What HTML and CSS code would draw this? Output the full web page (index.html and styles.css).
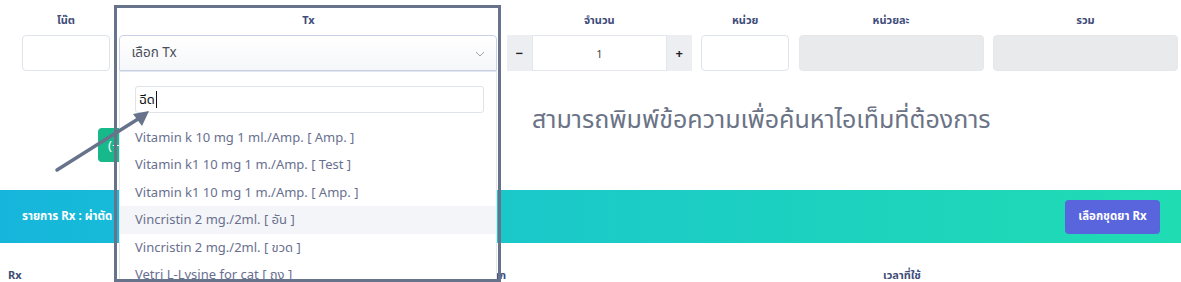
FILE: index.html
```html
<!DOCTYPE html>
<html lang="th">
<head>
<meta charset="utf-8">
<link rel="stylesheet" href="styles.css">
</head>
<body>
<div class="page">
  <div class="form-row">
    <div class="field">
      <div class="label">โน๊ต</div>
      <div class="input"></div>
    </div>
    <div class="field">
      <div class="label">Tx</div>
      <div class="select">
        <span>เลือก Tx</span>
        <svg class="chev" width="10" height="6" viewBox="0 0 10 6"><path d="M1 1 L5 5 L9 1" fill="none" stroke="#9aa0ac" stroke-width="1"/></svg>
      </div>
    </div>
    <div class="field">
      <div class="label">จำนวน</div>
      <div class="qty">
        <div class="qbtn">−</div>
        <div class="qinput">1</div>
        <div class="qbtn">+</div>
      </div>
    </div>
    <div class="field">
      <div class="label">หน่วย</div>
      <div class="input"></div>
    </div>
    <div class="field">
      <div class="label">หน่วยละ</div>
      <div class="input disabled"></div>
    </div>
    <div class="field">
      <div class="label">รวม</div>
      <div class="input disabled"></div>
    </div>
  </div>

  <div class="action-row">
    <div class="btn-green">(+)</div>
  </div>

  <div class="bar">
    <div class="bar-title">รายการ Rx : ผ่าตัด</div>
    <div class="btn-blue">เลือกชุดยา Rx</div>
  </div>

  <div class="table-head">
    <div class="th th-rx">Rx</div>
    <div class="th th-label">ฉลาก</div>
    <div class="th th-time">เวลาที่ใช้</div>
  </div>

  <div class="dropdown">
    <div class="search"><span>ฉีด</span><span class="caret"></span></div>
    <ul class="options">
      <li>Vitamin k 10 mg 1 ml./Amp. [ Amp. ]</li>
      <li>Vitamin k1 10 mg 1 m./Amp. [ Test ]</li>
      <li>Vitamin k1 10 mg 1 m./Amp. [ Amp. ]</li>
      <li class="hover">Vincristin 2 mg./2ml. [ อัน ]</li>
      <li>Vincristin 2 mg./2ml. [ ขวด ]</li>
      <li>Vetri L-Lysine for cat [ ถุง ]</li>
    </ul>
  </div>

  <div class="highlight-box"></div>

  <div class="hint">สามารถพิมพ์ข้อความเพื่อค้นหาไอเท็มที่ต้องการ</div>

  <svg class="arrow" width="1181" height="282" viewBox="0 0 1181 282">
    <line x1="57" y1="170" x2="138" y2="119" stroke="#66738a" stroke-width="3.5" stroke-linecap="round"/>
    <polygon points="149,111 133,114 142,126" fill="#66738a"/>
  </svg>
</div>
</body>
</html>
```

FILE: styles.css
```css
* { box-sizing: border-box; }
html, body { margin: 0; padding: 0; background: #fff; }
body {
  font-family: "Noto Sans", "Noto Sans Thai", "Open Sans", sans-serif;
  width: 1181px;
  height: 282px;
  overflow: hidden;
}
.page { position: relative; width: 1181px; height: 282px; overflow: hidden; }

.form-row {
  display: grid;
  grid-template-columns: 88px 378px 185px 88px 185px 185px;
  column-gap: 9.4px;
  padding: 11px 0 0 22px;
}
.field { display: flex; flex-direction: column; }
.label {
  text-align: center;
  font-size: 11px;
  font-weight: 700;
  color: #414c7a;
  height: 18px;
  line-height: 18px;
  margin-bottom: 6px;
}
.input {
  height: 36px;
  border: 1px solid #dfe3ea;
  border-radius: 4px;
  background: #fff;
}
.input.disabled { background: #e9eaec; border-color: #e6e7e9; }

.select {
  height: 36px;
  border: 1px solid #c9d1e6;
  border-radius: 4px 4px 0 0;
  background: linear-gradient(#ffffff, #f6f7fa);
  display: flex;
  align-items: center;
  justify-content: space-between;
  padding: 0 11px 0 11px;
  font-size: 13.5px;
  color: #4a4f5a;
}
.chev { margin-top: 2px; }

.qty { display: flex; height: 36px; }
.qbtn {
  width: 25px;
  background: #eceef1;
  display: flex;
  align-items: center;
  justify-content: center;
  font-weight: 700;
  font-size: 13px;
  color: #222;
}
.qinput {
  flex: 1;
  border: 1px solid #e3e6ec;
  display: flex;
  align-items: center;
  justify-content: center;
  font-size: 11px;
  color: #444;
}

.action-row { height: 119px; padding: 57px 0 0 98px; }
.btn-green {
  display: inline-flex;
  align-items: center;
  height: 34px;
  width: 60px;
  padding: 0 0 0 10px;
  border-radius: 4px;
  background: #17b98b;
  color: #fff;
  font-size: 13px;
}

.bar {
  height: 53px;
  background: linear-gradient(90deg, #16b6dc 0%, #1ac9c9 45%, #20dcb3 100%);
  display: flex;
  align-items: center;
  justify-content: space-between;
  padding: 0 21px 0 22px;
}
.bar-title { color: #fff; font-size: 11.5px; font-weight: 700; }
.btn-blue {
  height: 34px;
  width: 95px;
  border-radius: 4px;
  background: #5865dc;
  color: #fff;
  font-size: 11.5px;
  font-weight: 700;
  display: flex;
  align-items: center;
  justify-content: center;
}

.table-head { display: flex; height: 40px; align-items: flex-end; }
.th { font-size: 11px; font-weight: 700; color: #414c7a; line-height: 16px; }
.th-rx { padding-left: 8px; width: 481px; }
.th-label { width: 402px; }

.dropdown {
  position: absolute;
  left: 119px;
  top: 71px;
  width: 378px;
  height: 230px;
  background: #fff;
  border: 1px solid #e4e7ee;
  padding: 14px 12px 0 15px;
}
.search {
  height: 27px;
  border: 1px solid #dfe3ea;
  border-radius: 3px;
  display: flex;
  align-items: center;
  padding-left: 3px;
  font-size: 13px;
  color: #111;
}
.caret { display: inline-block; width: 1px; height: 17px; background: #111; margin-left: 1px; }
.options { list-style: none; margin: 11px -12px 0 -15px; padding: 0; }
.options li {
  height: 27.4px;
  line-height: 27.4px;
  padding-left: 15px;
  font-size: 13px;
  color: #69708f;
  white-space: nowrap;
}
.options li.hover { background: #f4f5f8; }

.highlight-box {
  position: absolute;
  left: 114px;
  top: 5px;
  width: 387px;
  height: 277px;
  border: 3px solid #66738a;
}

.hint {
  position: absolute;
  left: 532px;
  top: 101px;
  font-size: 25px;
  color: #6b7386;
  white-space: nowrap;
}

.arrow { position: absolute; left: 0; top: 0; pointer-events: none; }
```
